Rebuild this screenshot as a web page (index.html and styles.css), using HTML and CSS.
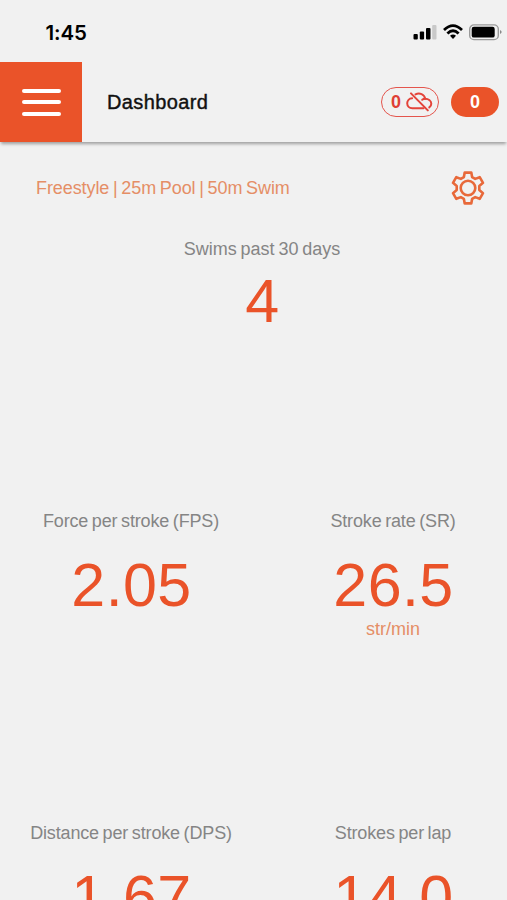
FILE: index.html
```html
<!DOCTYPE html>
<html lang="en">
<head>
<meta charset="utf-8">
<title>Dashboard</title>
<link rel="stylesheet" href="styles.css">
</head>
<body>
<div class="status">
  <span class="time">1:45</span>
  <svg class="status-icons" width="90" height="18" viewBox="0 0 90 18">
    <rect x="0.5" y="11" width="4.3" height="5.5" rx="1"/>
    <rect x="6.8" y="8.5" width="4.3" height="8" rx="1"/>
    <rect x="13" y="5" width="4.5" height="11.5" rx="1"/>
    <rect x="19.2" y="2" width="4.3" height="14.5" rx="1" fill="#c9c9c9"/>
    <g fill="none" stroke="#000" stroke-width="2.8">
      <path d="M31 6.9Q40 -1.7 49 6.9"/>
      <path d="M34.4 10.6Q40 5.1 45.6 10.6"/>
    </g>
    <path d="M37 12.7Q40 10.4 43 12.7L40 16Z"/>
    <rect x="56.7" y="1.9" width="28.6" height="14.7" rx="4.2" fill="none" stroke="#999" stroke-width="1.4"/>
    <rect x="58.7" y="3.8" width="23" height="10.8" rx="2.2"/>
    <path d="M87 7Q90.4 9 87 11Z" fill="#888"/>
  </svg>
</div>
<header class="bar">
  <div class="menu"><i></i><i></i><i></i></div>
  <h1 class="title">Dashboard</h1>
  <div class="offline">
    <span>0</span>
    <svg width="27" height="20" viewBox="0 0 27 20" fill="none" stroke="#e4443a" stroke-width="2" stroke-linecap="round">
      <path d="M6.1 6.2C3.2 6.4 1.2 8.7 1.2 11.3C1.2 14.1 3.4 16.2 6.2 16.2H17.5"/>
      <path d="M9.5 2.4C13.5 .3 18.5 2.3 19.2 6.8C22.6 7 25.3 9 25.3 11.8C25.3 13.3 24.5 14.6 23.3 15.4"/>
      <path d="M19.2 6.8Q17.4 6.8 16.2 7.8"/>
      <path d="M5 1.4L21.8 18.4"/>
    </svg>
  </div>
  <div class="count">0</div>
</header>
<main class="content">
  <div class="filter">
    <span class="filter-text">Freestyle | 25m Pool | 50m Swim</span>
    <svg class="gear" width="34" height="34" viewBox="0 0 34 34" fill="none" stroke="#e8693a" stroke-width="2.6" stroke-linejoin="round">
      <path d="M13.7 1.6H20.3L21.1 6.1L24.2 7.9L28.7 6.2L32 11.8L28.3 14.9V19.1L32 22.2L28.7 27.8L24.2 26.1L21.1 27.9L20.3 32.4H13.7L12.9 27.9L9.8 26.1L5.3 27.8L2 22.2L5.7 19.1V14.9L2 11.8L5.3 6.2L9.8 7.9L12.9 6.1Z"/>
      <circle cx="17" cy="17" r="7.3"/>
    </svg>
  </div>
  <section class="stats">
    <div class="stat total">
      <div class="label swims">Swims past 30 days</div>
      <div class="value">4</div>
    </div>
    <div class="stat">
      <div class="label">Force per stroke (FPS)</div>
      <div class="value">2.05</div>
    </div>
    <div class="stat">
      <div class="label">Stroke rate (SR)</div>
      <div class="value">26.5</div>
      <div class="unit">str/min</div>
    </div>
    <div class="stat">
      <div class="label">Distance per stroke (DPS)</div>
      <div class="value">1.67</div>
    </div>
    <div class="stat">
      <div class="label">Strokes per lap</div>
      <div class="value">14.0</div>
    </div>
  </section>
</main>
</body>
</html>
```
FILE: styles.css
```css
* { box-sizing: border-box; }
body {
  margin: 0;
  height: 900px;
  overflow: hidden;
  background: #f1f1f1;
  font-family: "Liberation Sans", Arial, sans-serif;
  white-space: nowrap;
}
.status {
  height: 62px;
  display: flex;
  justify-content: space-between;
  padding: 20px 4px 0 45.5px;
}
.time {
  font: 600 20.5px/25px Inter, sans-serif;
  letter-spacing: -0.1px;
}
.status-icons { margin-top: 3px; }
.bar {
  height: 80px;
  display: flex;
  align-items: center;
  padding-right: 8px;
  box-shadow: 0 3px 3px -1px rgba(0, 0, 0, .34);
}
.menu {
  width: 82px;
  height: 80px;
  background: #ea5329;
  display: flex;
  flex-direction: column;
  align-items: center;
  justify-content: center;
  gap: 7.5px;
}
.menu i {
  width: 39px;
  height: 4px;
  border-radius: 2px;
  background: #fff;
}
.title {
  margin: 0 auto 0 25px;
  font-size: 20px;
  font-weight: 400;
  letter-spacing: .38px;
  color: #111;
  -webkit-text-stroke: .4px #111;
}
.offline, .count {
  height: 30px;
  border-radius: 15px;
  display: flex;
  align-items: center;
  justify-content: center;
  font-size: 18px;
  font-weight: 700;
}
.offline {
  width: 58px;
  margin-right: 12px;
  padding-left: 4px;
  gap: 5px;
  border: 1.5px solid #e4554d;
  color: #df3f35;
}
.offline svg { flex: none; }
.count {
  width: 48px;
  background: #ea5329;
  color: #fff;
}
.content { width: 524px; }
.filter {
  height: 88px;
  display: flex;
  align-items: center;
  justify-content: space-between;
  padding: 3px 39px 0 36px;
}
.filter-text, .unit { color: #e58e66; }
.filter-text {
  padding-top: 2px;
  font-size: 18px;
  letter-spacing: -.08px;
  word-spacing: -1.2px;
}
.stats {
  display: grid;
  grid-template-columns: 262px 262px;
  grid-template-rows: 271px 312px 100px;
}
.stat { text-align: center; padding-top: 10px; }
.total { grid-column: 1 / 3; padding-top: 9px; }
.label {
  font-size: 18px;
  line-height: 20px;
  letter-spacing: -.15px;
  word-spacing: -1.2px;
  color: #858585;
}
.swims { letter-spacing: 0; }
.value {
  margin-top: 24px;
  padding-left: 1px;
  font-size: 61px;
  line-height: 60px;
  letter-spacing: .4px;
  color: #ea5329;
}
.total .value { margin-top: 12px; }
.unit {
  margin-top: 4px;
  font-size: 18px;
  line-height: 20px;
}
```
